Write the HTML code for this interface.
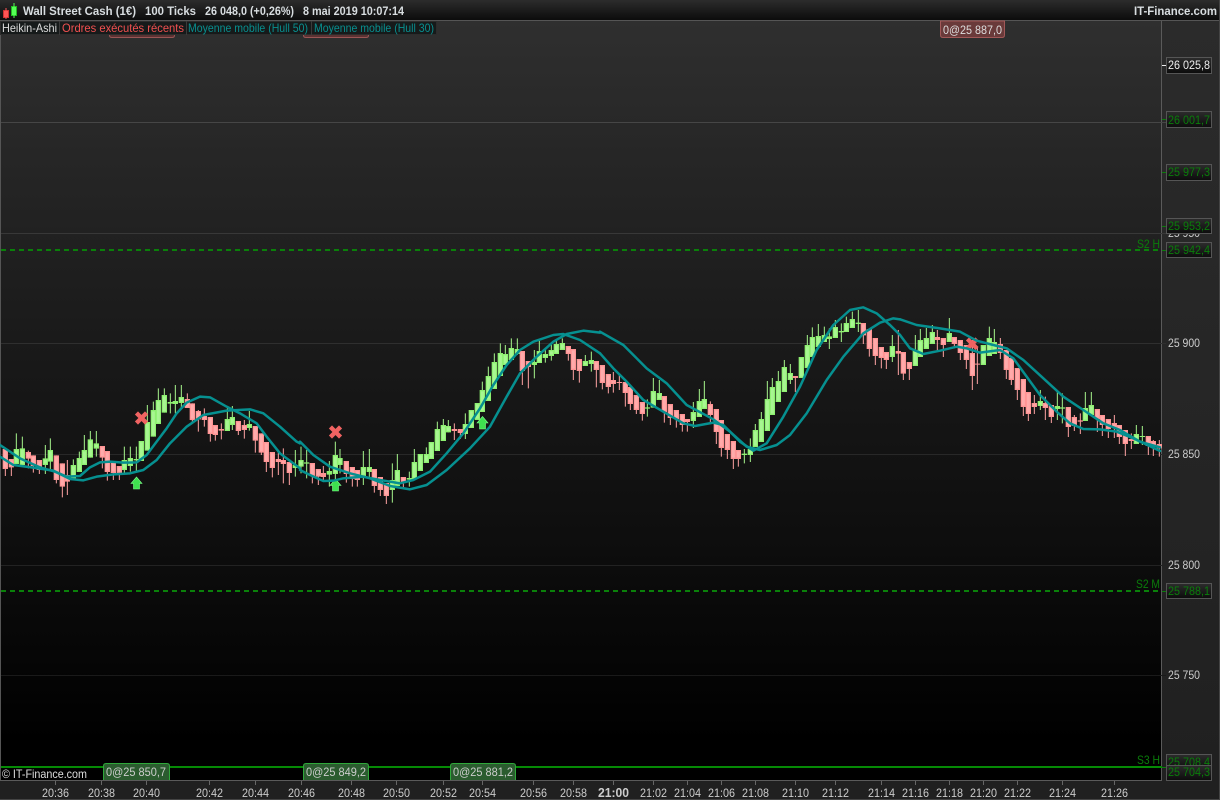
<!DOCTYPE html>
<html><head><meta charset="utf-8"><style>
html,body{margin:0;padding:0;background:#000}
svg{display:block}
text{font-family:"Liberation Sans",sans-serif;font-size:12px}
.p{fill:#ccc}.gp{fill:#0a7d0a}
.h{font-weight:bold;fill:#d8dde0;font-size:11.5px}
.ww{fill:none;stroke:#a6f58c;stroke-width:3}
.wr{fill:none;stroke:#ffa3a3;stroke-width:3}
.bg{fill:none;stroke:#8ef070;stroke-width:16}
.bgi{fill:none;stroke:#a8f692;stroke-width:9}
.br{fill:none;stroke:#ff9494;stroke-width:16}
.bri{fill:none;stroke:#ffabab;stroke-width:9}
.l{fill:none;stroke:#069090;stroke-width:7.5;stroke-linejoin:round;stroke-linecap:round}
.box{fill:url(#bx);stroke:#555;stroke-width:1}
</style></head><body>
<svg width="1220" height="800" viewBox="0 0 1220 800" xmlns="http://www.w3.org/2000/svg">
<defs>
<linearGradient id="c" x1="0" y1="0" x2="0" y2="1"><stop offset="0" stop-color="#2f2f2f"/><stop offset=".5" stop-color="#161616"/><stop offset=".68" stop-color="#0e0e0e"/><stop offset=".95" stop-color="#000"/></linearGradient>
<linearGradient id="hd" x1="0" y1="0" x2="0" y2="1"><stop offset="0" stop-color="#2c2c2c"/><stop offset="1" stop-color="#0c0c0c"/></linearGradient>
<linearGradient id="bx" x1="0" y1="0" x2="0" y2="1"><stop offset="0" stop-color="#2c2c2c"/><stop offset="1" stop-color="#0c0c0c"/></linearGradient>
<linearGradient id="ax" x1="0" y1="0" x2="0" y2="1"><stop offset="0" stop-color="#2b2b2b"/><stop offset="1" stop-color="#202020"/></linearGradient>
</defs>
<rect width="1220" height="800" fill="#202020"/>
<rect x="1162" y="21" width="58" height="760" fill="url(#ax)"/>
<rect x="1" y="21" width="1160" height="759" fill="url(#c)"/>
<rect y="0" width="1220" height="20" fill="url(#hd)"/>
<rect y="20" width="1220" height="1" fill="#555"/>
<rect x="0" y="21" width="1" height="760" fill="#555"/>
<rect x="1161" y="21" width="1" height="760" fill="#5a5a5a"/>
<rect x="0" y="780" width="1162" height="1" fill="#5a5a5a"/>
<rect x="1219" y="0" width="1" height="800" fill="#444"/>
<rect x="0" y="799" width="1220" height="1" fill="#444"/>

<!-- logo -->
<rect x="3.5" y="10.5" width="5" height="7" fill="#f55" stroke="#c33"/><rect x="5.5" y="8" width="1" height="11" fill="#f55"/>
<rect x="11.5" y="6.5" width="5" height="9" fill="#5f5" stroke="#2b2"/><rect x="13.5" y="3" width="1" height="15" fill="#5f5"/>
<text class="h" x="23" y="15" textLength="113" lengthAdjust="spacingAndGlyphs">Wall Street Cash (1€)</text>
<text class="h" x="145" y="15" textLength="51" lengthAdjust="spacingAndGlyphs">100 Ticks</text>
<text class="h" x="205" y="15" textLength="89" lengthAdjust="spacingAndGlyphs">26 048,0 (+0,26%)</text>
<text class="h" x="303" y="15" textLength="101" lengthAdjust="spacingAndGlyphs">8 mai 2019 10:07:14</text>
<text class="h" x="1134" y="15" textLength="83" lengthAdjust="spacingAndGlyphs">IT-Finance.com</text>

<!-- grid -->
<g>
<rect x="1" y="122" width="1165" height="1" fill="#464646"/>
<rect x="1" y="233" width="1165" height="1" fill="#383838"/>
<rect x="1" y="343" width="1165" height="1" fill="#2f2f2f"/>
<rect x="1" y="454" width="1165" height="1" fill="#282828"/>
<rect x="1" y="565" width="1165" height="1" fill="#222"/>
<rect x="1" y="675" width="1165" height="1" fill="#1a1a1a"/>
</g>

<!-- top hidden tags -->
<path d="M109.500 33V35.500Q109.500 37.500 112 37.500H172Q174.500 37.500 174.500 35.500V33z" fill="#5a3232" stroke="#9a5555"/>
<path d="M303.500 33V35.500Q303.500 37.500 306 37.500H366Q368.500 37.500 368.500 35.500V33z" fill="#5a3232" stroke="#9a5555"/>

<!-- candles -->
<g transform="translate(0,380) scale(.33333)">
<path class="ww" d="M49 160V252M67 170V255M136 195V282M151 175V270M220 238V295M238 215V276M253 165V255M271 153V233M289 153V230M373 200V280M391 200V275M409 200V275M424 183V243M442 75V212M460 65V170M475 25V132M493 25V98M511 40V100M526 15V100M544 15V85M682 85V153M697 78V150M748 93V152M886 210V290"/>
<path class="wr" d="M16 207V288M34 237V288M85 212V265M100 226V278M118 240V282M169 226V310M187 250V352M202 240V345M307 198V265M322 213V302M340 245V300M358 258V300M562 40V84M577 70V130M595 90V155M613 85V140M631 111V185M646 135V182M664 130V178M715 123V165M733 120V176M766 138V218M784 160V225M799 186V276M817 216V292M835 210V285M850 205V310M868 246V315"/>
<path class="bg" d="M49 207V252M67 205V255M136 235V255M151 210V245M220 255V295M238 234V276M253 210V255M271 178V233M289 190V206M373 240V270M391 234V258M409 237V241M424 183V243M442 126V212M460 90V170M475 60V132M493 45V98M511 66V71M526 63V72M544 51V69M682 117V153M697 111V135M748 132V144M886 255V264"/>
<path class="br" d="M16 207V267M34 237V262M85 216V236M100 226V258M118 240V270M169 226V300M187 250V320M202 285V305M307 198V233M322 213V276M340 245V279M358 258V279M562 57V84M577 70V120M595 93V118M613 108V120M631 111V162M646 135V165M664 147V152M715 123V153M733 135V150M766 138V182M784 160V218M799 186V246M817 216V264M835 237V246M850 240V252M868 246V279"/>
<path class="bgi" d="M49 211V248M67 209V251M136 239V251M151 214V241M220 259V291M238 238V272M253 214V251M271 182V229M289 194V202M373 244V266M391 238V254M424 187V239M442 130V208M460 94V166M475 64V128M493 49V94M544 55V65M682 121V149M697 115V131M748 136V140"/>
<path class="bri" d="M16 211V263M34 241V258M85 220V232M100 230V254M118 244V266M169 230V296M187 254V316M202 289V301M307 202V229M322 217V272M340 249V275M358 262V275M562 61V80M577 74V116M595 97V114M613 112V116M631 115V158M646 139V161M715 127V149M733 139V146M766 142V178M784 164V214M799 190V242M817 220V260M850 244V248M868 250V275"/>
</g>
<g transform="translate(300,330) scale(.33333)">
<path class="ww" d="M3 350V430M20 360V445M88 393V470M106 335V455M120 357V430M190 363V465M208 357V445M277 400V518M292 372V468M328 425V470M343 357V447M361 372V423M379 352V399M394 336V387M412 275V363M430 267V333M445 270V307M496 250V327M514 240V294M532 219V270M547 155V246M565 110V213M583 70V177M601 40V138M616 45V105M634 25V90M652 25V75M703 60V145M718 32V99M736 55V98M754 40V92M769 30V72M787 25V60M856 75V108M874 65V125"/>
<path class="wr" d="M37 399V460M55 417V465M70 408V455M139 393V458M157 411V470M172 420V470M223 417V488M241 441V498M259 459V522M310 441V472M463 280V330M481 297V327M667 63V165M685 93V175M805 48V92M820 57V150M838 87V158M889 93V172"/>
<path class="bg" d="M3 390V410M20 397V401M88 423V434M106 375V432M120 384V405M190 411V438M208 411V426M277 450V480M292 420V468M328 444V449M343 396V447M361 372V423M379 372V399M394 336V387M412 297V363M430 285V333M445 288V307M496 282V312M514 240V294M532 219V270M547 180V246M565 138V213M583 96V177M601 69V138M616 72V105M634 54V90M652 57V72M703 96V105M718 63V99M736 72V84M754 60V78M769 42V72M787 39V60M856 93V108M874 90V102"/>
<path class="br" d="M37 399V438M55 417V440M70 429V441M139 393V432M157 411V447M172 420V450M223 417V468M241 441V480M259 459V498M310 441V456M463 297V303M481 297V309M667 63V123M685 93V111M805 48V72M820 57V120M838 87V123M889 93V120"/>
<path class="bgi" d="M3 394V406M106 379V428M120 388V401M190 415V434M208 415V422M277 454V476M292 424V464M343 400V443M361 376V419M379 376V395M394 340V383M412 301V359M430 289V329M445 292V303M496 286V308M514 244V290M532 223V266M547 184V242M565 142V209M583 100V173M601 73V134M616 76V101M634 58V86M652 61V68M718 67V95M736 76V80M754 64V74M769 46V68M787 43V56M856 97V104M874 94V98"/>
<path class="bri" d="M37 403V434M55 421V436M139 397V428M157 415V443M172 424V446M223 421V464M241 445V476M259 463V494M310 445V452M667 67V119M685 97V107M805 52V68M820 61V116M838 91V119M889 97V116"/>
</g>
<g transform="translate(600,300) scale(.33333)">
<path class="ww" d="M142 298V350M160 234V323M178 240V300M280 306V384M298 267V351M313 243V327M433 447V490M451 415V486M466 372V441M484 336V426M502 243V393M517 234V345M535 213V306M553 180V276M571 192V252M604 171V234M622 105V204M637 82V171M655 72V141M673 80V126M688 85V147M706 60V114M724 70V126M739 50V96M757 35V84M775 30V96M877 105V186"/>
<path class="wr" d="M7 195V268M25 222V280M40 216V278M58 222V270M76 246V320M91 261V330M109 285V342M127 306V362M193 288V368M211 312V375M229 330V383M247 342V395M262 357V395M331 304V372M349 327V432M364 360V470M382 402V477M400 423V507M415 450V500M586 228V276M790 69V132M808 87V170M826 114V195M844 141V205M859 156V207M895 90V225"/>
<path class="bg" d="M142 322V326M160 273V323M178 279V300M280 336V363M298 303V351M313 297V327M433 461V465M451 447V465M466 390V441M484 357V426M502 297V393M517 261V345M535 243V306M553 201V276M571 219V240M604 171V234M622 135V204M637 111V171M655 108V141M673 105V126M688 109V117M706 81V114M724 93V97M739 69V96M757 57V84M775 68V72M877 138V171"/>
<path class="br" d="M7 195V249M25 222V261M40 240V252M58 246V249M76 246V279M91 261V312M109 285V330M127 306V342M193 288V336M211 312V354M229 330V357M247 342V375M262 357V366M331 312V345M349 327V396M364 360V444M382 402V450M400 423V477M415 450V477M586 228V234M790 69V106M808 87V147M826 114V168M844 141V174M859 156V180M895 153V161"/>
<path class="bgi" d="M160 277V319M178 283V296M280 340V359M298 307V347M313 301V323M451 451V461M466 394V437M484 361V422M502 301V389M517 265V341M535 247V302M553 205V272M571 223V236M604 175V230M622 139V200M637 115V167M655 112V137M673 109V122M706 85V110M739 73V92M757 61V80M877 142V167"/>
<path class="bri" d="M7 199V245M25 226V257M40 244V248M76 250V275M91 265V308M109 289V326M127 310V338M193 292V332M211 316V350M229 334V353M247 346V371M262 361V362M331 316V341M349 331V392M364 364V440M382 406V446M400 427V473M415 454V473M790 73V102M808 91V143M826 118V164M844 145V170M859 160V176"/>
</g>
<g transform="translate(900,310) scale(.33333)">
<path class="ww" d="M46 75V168M61 57V141M79 54V117M97 45V102M148 24V96M250 105V165M268 50V138M283 57V132M421 240V300M472 245V330M487 250V340M556 246V333M574 246V315M709 345V402M727 348V405"/>
<path class="wr" d="M10 126V210M28 156V210M112 60V123M130 84V141M163 81V115M181 90V150M199 105V177M217 90V240M232 110V222M301 84V147M319 120V207M334 144V225M352 174V270M370 207V318M385 246V333M403 255V312M436 260V330M454 285V339M505 291V381M523 315V363M541 310V372M592 297V366M607 315V378M625 327V384M643 315V384M658 345V402M676 360V438M694 370V417M745 378V435M760 390V438M778 390V440"/>
<path class="bg" d="M46 120V168M61 90V141M79 84V117M97 66V102M148 69V96M250 105V165M268 84V138M283 96V132M421 273V288M472 288V297M487 292V296M556 294V333M574 285V315M709 372V402M727 378V381"/>
<path class="br" d="M10 126V191M28 156V177M112 81V90M130 84V105M163 81V102M181 90V129M199 105V150M217 129V198M232 161V164M301 102V129M319 120V180M334 144V210M352 174V240M370 207V291M385 246V312M403 279V291M436 279V294M454 285V321M505 291V351M523 321V348M541 331V335M592 297V327M607 315V345M625 327V357M643 339V354M658 345V381M676 360V402M694 387V393M745 378V408M760 393V411M778 402V415"/>
<path class="bgi" d="M46 124V164M61 94V137M79 88V113M97 70V98M148 73V92M250 109V161M268 88V134M283 100V128M421 277V284M556 298V329M574 289V311M709 376V398"/>
<path class="bri" d="M10 130V187M28 160V173M130 88V101M163 85V98M181 94V125M199 109V146M217 133V194M301 106V125M319 124V176M334 148V206M352 178V236M370 211V287M385 250V308M403 283V287M436 283V290M454 289V317M505 295V347M523 325V344M592 301V323M607 319V341M625 331V353M643 343V350M658 349V377M676 364V398M745 382V404M760 397V407M778 406V411"/>
</g>

<!-- arrows -->
<g fill="#3fe04f" stroke="#7dff8a" stroke-width=".6">
<path d="M136.500 477L142 483.500H139.500V489H133.500V483.500H131z"/>
<path d="M335.500 479L341 485.500H338.500V491H332.500V485.500H330z"/>
<path d="M482.500 416.500L488 423H485.500V429H479.500V423H477z"/>
</g>
<!-- X markers -->
<g stroke="#f06362" stroke-width="4.400" stroke-linecap="square">
<path d="M138 414.500L145 421.500M145 414.500L138 421.500"/>
<path d="M332 428.500L339 435.500M339 428.500L332 435.500"/>
<path d="M969 340.500L975.500 347M975.500 340.500L969 347"/>
</g>

<!-- hull lines -->
<g transform="translate(0,380) scale(.33333)">
<path class="l" d="M0 195L60 235L120 262L165 275L200 290L240 288L270 262L300 247L330 245L370 248L410 247L440 225L470 185L500 145L530 100L560 68L600 50L630 52L680 80L720 100L770 130L800 170L840 220L880 250L900 265"/>
<path class="l" d="M0 230L40 255L100 263L160 272L210 297L250 301L290 290L340 283L390 280L430 270L470 240L510 190L560 140L610 105L680 92L750 88L790 100L840 140L890 185L900 190"/>
</g>
<g transform="translate(300,330) scale(.33333)">
<path class="l" d="M0 420L30 435L70 453L100 452L130 445L190 440L240 450L300 460L340 450L390 425L440 370L490 310L540 235L580 165L620 105L660 60L700 35L760 15L790 12L840 30L900 70"/>
<path class="l" d="M0 335L40 375L90 410L150 430L210 445L270 468L330 478L380 465L440 420L510 355L570 290L620 200L660 130L710 80L760 35L800 12L850 2L900 8"/>
</g>
<g transform="translate(600,300) scale(.33333)">
<path class="l" d="M0 95L70 135L140 205L200 250L260 315L340 358L390 395L440 440L480 450L530 435L570 405L620 340L680 240L730 170L790 100L840 68L880 55L900 58"/>
<path class="l" d="M0 160L40 205L80 245L130 300L190 335L250 370L285 378L340 368L370 375L420 425L460 452L500 430L550 350L600 260L650 150L700 75L750 30L790 22L830 40L870 75L900 105"/>
</g>
<g transform="translate(900,310) scale(.33333)">
<path class="l" d="M0 75L30 115L70 132L120 122L170 110L200 115L240 128L300 120L340 145L380 200L420 255L470 305L510 340L550 357L600 358L650 365L700 385L780 423"/>
<path class="l" d="M0 28L50 45L120 55L180 65L230 92L280 105L320 115L370 150L430 205L490 260L550 300L610 340L660 360L720 395L780 412"/>
</g>

<!-- level lines -->
<line x1="1" x2="1162" y1="250" y2="250" stroke="#0a800a" stroke-dasharray="5 4" stroke-width="2"/>
<line x1="1" x2="1162" y1="591" y2="591" stroke="#0a800a" stroke-dasharray="5 4" stroke-width="2"/>
<rect x="1" y="766" width="1161" height="2" fill="#058a05"/>
<text class="gp" x="1137" y="248" textLength="23" lengthAdjust="spacingAndGlyphs">S2 H</text>
<text class="gp" x="1136" y="588" textLength="24" lengthAdjust="spacingAndGlyphs">S2 M</text>
<text class="gp" x="1137" y="764" textLength="23" lengthAdjust="spacingAndGlyphs">S3 H</text>

<!-- legend -->
<rect x="0.500" y="21.500" width="436" height="13" fill="#161a1a" stroke="#2c2c2c"/>
<rect x="59" y="21" width="1" height="14" fill="#3a3a3a"/><rect x="186" y="21" width="1" height="14" fill="#3a3a3a"/><rect x="311" y="21" width="1" height="14" fill="#3a3a3a"/>
<text x="2" y="32" fill="#ddd" textLength="55" lengthAdjust="spacingAndGlyphs">Heikin-Ashi</text>
<text x="62" y="32" fill="#f05050" textLength="122" lengthAdjust="spacingAndGlyphs">Ordres exécutés récents</text>
<text x="188" y="32" fill="#088f8f" textLength="120" lengthAdjust="spacingAndGlyphs">Moyenne mobile (Hull 50)</text>
<text x="314" y="32" fill="#088f8f" textLength="120" lengthAdjust="spacingAndGlyphs">Moyenne mobile (Hull 30)</text>

<!-- top tag -->
<path d="M940.500 21V35Q940.500 37.500 943 37.500H1002Q1004.500 37.500 1004.500 35V21z" fill="#6a3a3a" stroke="#a25858"/>
<text x="943" y="34" fill="#ddd" textLength="59" lengthAdjust="spacingAndGlyphs">0@25 887,0</text>

<!-- bottom tags -->
<g fill="#2b5c2f" stroke="#2fa83a">
<path d="M103.500 780V766Q103.500 763.500 106 763.500H167Q169.500 763.500 169.500 766V780"/>
<path d="M303.500 780V766Q303.500 763.500 306 763.500H366Q368.500 763.500 368.500 766V780"/>
<path d="M450.500 780V766Q450.500 763.500 453 763.500H513Q515.500 763.500 515.500 766V780"/>
</g>
<g fill="#ccc">
<text x="106" y="776" textLength="60" lengthAdjust="spacingAndGlyphs">0@25 850,7</text>
<text x="306" y="776" textLength="60" lengthAdjust="spacingAndGlyphs">0@25 849,2</text>
<text x="453" y="776" textLength="60" lengthAdjust="spacingAndGlyphs">0@25 881,2</text>
<text x="2" y="778" fill="#ddd" textLength="85" lengthAdjust="spacingAndGlyphs">© IT-Finance.com</text>
</g>

<!-- right axis -->
<g>
<rect x="1162" y="65" width="4" height="1" fill="#eee"/><rect x="1162" y="119" width="4" height="1" fill="#0a7d0a"/><rect x="1162" y="172" width="4" height="1" fill="#0a7d0a"/><rect x="1162" y="226" width="4" height="1" fill="#0a7d0a"/><rect x="1162" y="250" width="4" height="1" fill="#0a7d0a"/><rect x="1162" y="591" width="4" height="1" fill="#0a7d0a"/><rect x="1162" y="767" width="4" height="1" fill="#0a7d0a"/>
</g>
<text class="p" x="1168" y="237" textLength="32" lengthAdjust="spacingAndGlyphs">25 950</text>
<text class="p" x="1168" y="347" textLength="32" lengthAdjust="spacingAndGlyphs">25 900</text>
<text class="p" x="1168" y="458" textLength="32" lengthAdjust="spacingAndGlyphs">25 850</text>
<text class="p" x="1168" y="569" textLength="32" lengthAdjust="spacingAndGlyphs">25 800</text>
<text class="p" x="1168" y="679" textLength="32" lengthAdjust="spacingAndGlyphs">25 750</text>
<rect class="box" x="1166.500" y="57.500" width="45" height="16"/><text x="1168" y="69" fill="#eee" textLength="42" lengthAdjust="spacingAndGlyphs">26 025,8</text>
<rect class="box" x="1166.500" y="111.500" width="45" height="16"/><text class="gp" x="1168" y="124" textLength="42" lengthAdjust="spacingAndGlyphs">26 001,7</text>
<rect class="box" x="1166.500" y="164.500" width="45" height="16"/><text class="gp" x="1168" y="176" textLength="42" lengthAdjust="spacingAndGlyphs">25 977,3</text>
<rect class="box" x="1166.500" y="218.500" width="45" height="15"/><text class="gp" x="1168" y="230" textLength="42" lengthAdjust="spacingAndGlyphs">25 953,2</text>
<rect class="box" x="1166.500" y="242.500" width="45" height="15"/><text class="gp" x="1168" y="254" textLength="42" lengthAdjust="spacingAndGlyphs">25 942,4</text>
<rect class="box" x="1166.500" y="583.500" width="45" height="15"/><text class="gp" x="1168" y="595" textLength="42" lengthAdjust="spacingAndGlyphs">25 788,1</text>
<rect class="box" x="1166.500" y="754.500" width="45" height="15"/><text class="gp" x="1168" y="766" textLength="42" lengthAdjust="spacingAndGlyphs">25 708,4</text>
<rect class="box" x="1166.500" y="765.500" width="45" height="15"/><text class="gp" x="1168" y="776" textLength="42" lengthAdjust="spacingAndGlyphs">25 704,3</text>

<!-- time axis -->
<g stroke="#666"><path d="M55.500 781V785M101.500 781V785M146.500 781V785M209.500 781V785M255.500 781V785M301.500 781V785M351.500 781V785M396.500 781V785M443.500 781V785M482.500 781V785M533.500 781V785M573.500 781V785M613.500 781V785M653.500 781V785M687.500 781V785M721.500 781V785M755.500 781V785M795.500 781V785M835.500 781V785M881.500 781V785M915.500 781V785M949.500 781V785M983.500 781V785M1017.500 781V785M1062.500 781V785M1114.500 781V785"/></g>
<g class="p">
<text x="42" y="797" textLength="27" lengthAdjust="spacingAndGlyphs">20:36</text><text x="88" y="797" textLength="27" lengthAdjust="spacingAndGlyphs">20:38</text><text x="133" y="797" textLength="27" lengthAdjust="spacingAndGlyphs">20:40</text><text x="196" y="797" textLength="27" lengthAdjust="spacingAndGlyphs">20:42</text><text x="242" y="797" textLength="27" lengthAdjust="spacingAndGlyphs">20:44</text><text x="288" y="797" textLength="27" lengthAdjust="spacingAndGlyphs">20:46</text><text x="338" y="797" textLength="27" lengthAdjust="spacingAndGlyphs">20:48</text><text x="383" y="797" textLength="27" lengthAdjust="spacingAndGlyphs">20:50</text><text x="430" y="797" textLength="27" lengthAdjust="spacingAndGlyphs">20:52</text><text x="469" y="797" textLength="27" lengthAdjust="spacingAndGlyphs">20:54</text><text x="520" y="797" textLength="27" lengthAdjust="spacingAndGlyphs">20:56</text><text x="560" y="797" textLength="27" lengthAdjust="spacingAndGlyphs">20:58</text><text x="598" y="797" textLength="31" lengthAdjust="spacingAndGlyphs" style="font-weight:bold;font-size:13px">21:00</text><text x="640" y="797" textLength="27" lengthAdjust="spacingAndGlyphs">21:02</text><text x="674" y="797" textLength="27" lengthAdjust="spacingAndGlyphs">21:04</text><text x="708" y="797" textLength="27" lengthAdjust="spacingAndGlyphs">21:06</text><text x="742" y="797" textLength="27" lengthAdjust="spacingAndGlyphs">21:08</text><text x="782" y="797" textLength="27" lengthAdjust="spacingAndGlyphs">21:10</text><text x="822" y="797" textLength="27" lengthAdjust="spacingAndGlyphs">21:12</text><text x="868" y="797" textLength="27" lengthAdjust="spacingAndGlyphs">21:14</text><text x="902" y="797" textLength="27" lengthAdjust="spacingAndGlyphs">21:16</text><text x="936" y="797" textLength="27" lengthAdjust="spacingAndGlyphs">21:18</text><text x="970" y="797" textLength="27" lengthAdjust="spacingAndGlyphs">21:20</text><text x="1004" y="797" textLength="27" lengthAdjust="spacingAndGlyphs">21:22</text><text x="1049" y="797" textLength="27" lengthAdjust="spacingAndGlyphs">21:24</text><text x="1101" y="797" textLength="27" lengthAdjust="spacingAndGlyphs">21:26</text>
</g>
</svg>
</body></html>
